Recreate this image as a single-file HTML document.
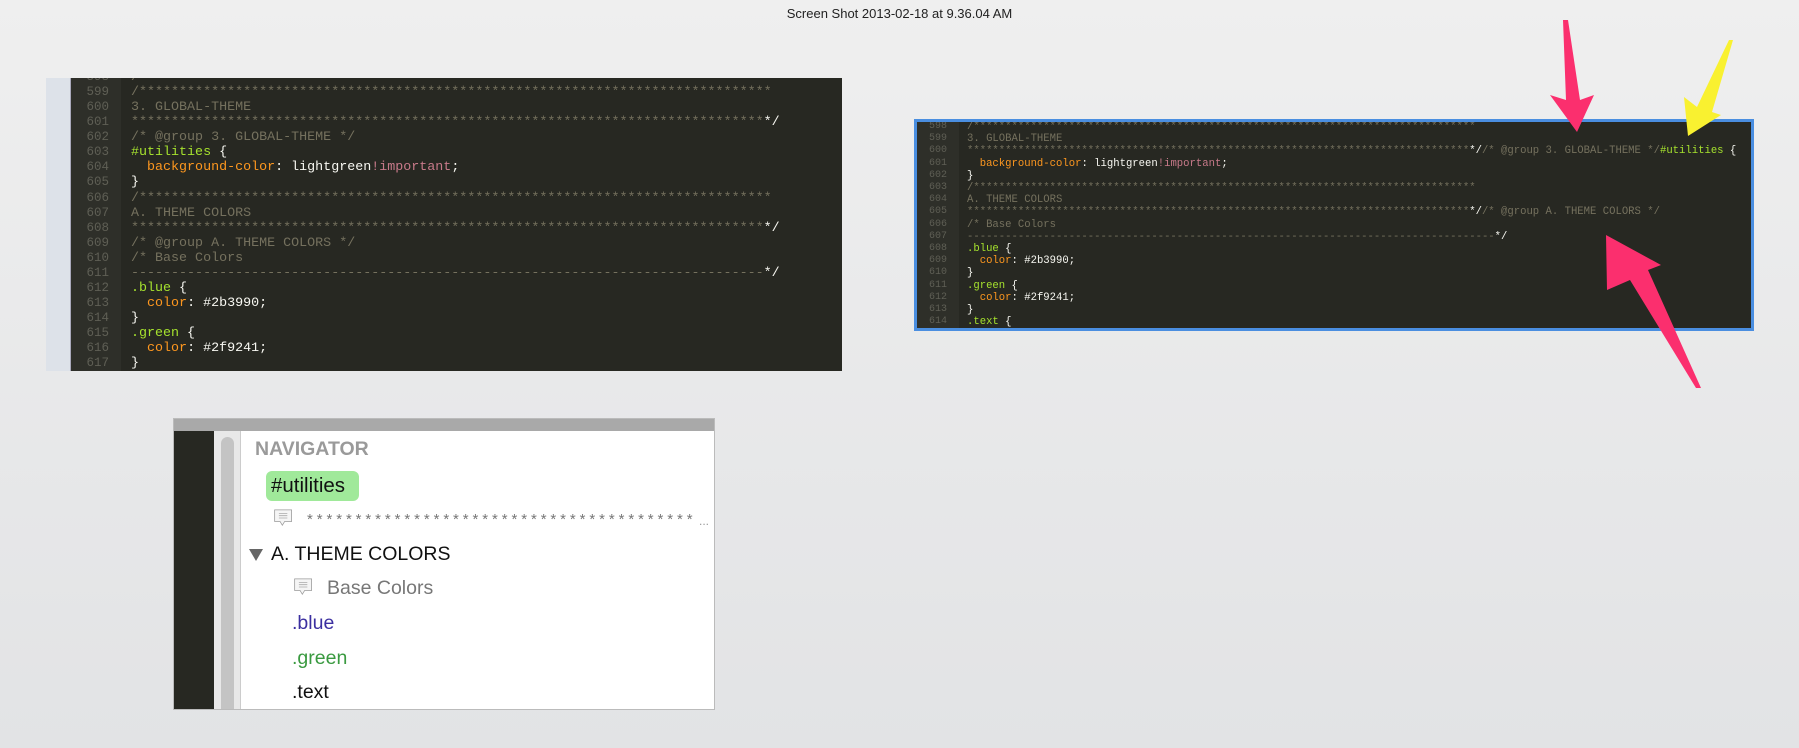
<!DOCTYPE html>
<html><head><meta charset="utf-8"><style>
*{margin:0;padding:0;box-sizing:border-box}
body{width:1799px;height:748px;overflow:hidden;background:linear-gradient(#efefef,#e2e3e5);font-family:"Liberation Sans",sans-serif;position:relative}
.title{position:absolute;top:6px;left:0;width:1799px;text-align:center;font-size:13px;color:#222}
.ed{position:absolute;background:#272822;overflow:hidden;font-family:"Liberation Mono",monospace;white-space:pre}
.ln{position:absolute;top:0;color:#5f5f55;text-align:right}
.code{position:absolute;top:0;color:#f8f8f2}
.c{color:#75715e}.s{color:#a6e22e}.p{color:#fd971f}.i{color:#c87a8a}
#e1{left:46px;top:78px;width:796px;height:293px;font-size:13.35px;line-height:15.06px}
#e1 .gut{position:absolute;left:0;top:0;width:25px;height:100%;background:#dde2e9;border-right:1px solid #aab}
#e1 .num{position:absolute;left:25px;top:0;width:50px;height:100%;background:#2e2f29}
#e1 .ln{left:25px;width:38px;top:-8px;font-size:12.5px}
#e1 .code{left:85px;top:-8px}
#e2{left:914px;top:119px;width:840px;height:212px;font-size:10.6px;line-height:12.2px;border:3px solid #4a8ee0}
#e2 .num{position:absolute;left:0;top:0;width:42px;height:100%;background:#2e2f29}
#e2 .ln{left:0;width:30px;top:-1px;font-size:10px}
#e2 .code{left:50px;top:-1px}
#nav{position:absolute;left:173px;top:418px;width:542px;height:292px;background:#fff;border:1px solid #bbb;overflow:hidden}
#nav .bar{position:absolute;left:0;top:0;width:100%;height:12px;background:#a9a9a9}
#nav .dark{position:absolute;left:0;top:12px;width:40px;height:280px;background:#272822}
#nav .sb{position:absolute;left:40px;top:12px;width:27px;height:280px;background:#e8e8e8;border-right:1px solid #ccc}
#nav .th{position:absolute;left:7px;top:6px;width:13px;height:280px;background:#c4c4c4;border-radius:7px}
.t{position:absolute;white-space:nowrap}
.ic{position:absolute;width:27px;height:20px}
</style></head><body>
<div class="title">Screen Shot 2013-02-18 at 9.36.04 AM</div>

<div class="ed" id="e1"><div class="gut"></div><div class="num"></div>
<div class="ln">598
599
600
601
602
603
604
605
606
607
608
609
610
611
612
613
614
615
616
617</div>
<div class="code"><span class="c">/*******************************************************************************</span>
<span class="c">/*******************************************************************************</span>
<span class="c">3. GLOBAL-THEME</span>
<span class="c">*******************************************************************************</span>*/
<span class="c">/* @group 3. GLOBAL-THEME */</span>
<span class="s">#utilities</span> {
  <span class="p">background-color</span>: lightgreen<span class="i">!important</span>;
}
<span class="c">/*******************************************************************************</span>
<span class="c">A. THEME COLORS</span>
<span class="c">*******************************************************************************</span>*/
<span class="c">/* @group A. THEME COLORS */</span>
<span class="c">/* Base Colors</span>
<span class="c">-------------------------------------------------------------------------------</span>*/
<span class="s">.blue</span> {
  <span class="p">color</span>: #2b3990;
}
<span class="s">.green</span> {
  <span class="p">color</span>: #2f9241;
}</div></div>

<div class="ed" id="e2"><div class="num"></div>
<div class="ln">598
599
600
601
602
603
604
605
606
607
608
609
610
611
612
613
614</div>
<div class="code"><span class="c">/*******************************************************************************</span>
<span class="c">3. GLOBAL-THEME</span>
<span class="c">*******************************************************************************</span>*/<span class="c">/* @group 3. GLOBAL-THEME */</span><span class="s">#utilities</span> {
  <span class="p">background-color</span>: lightgreen<span class="i">!important</span>;
}
<span class="c">/*******************************************************************************</span>
<span class="c">A. THEME COLORS</span>
<span class="c">*******************************************************************************</span>*/<span class="c">/* @group A. THEME COLORS */</span>
<span class="c">/* Base Colors</span>
<span class="c">-----------------------------------------------------------------------------------</span>*/
<span class="s">.blue</span> {
  <span class="p">color</span>: #2b3990;
}
<span class="s">.green</span> {
  <span class="p">color</span>: #2f9241;
}
<span class="s">.text</span> {</div></div>

<div id="nav"><div class="bar"></div><div class="dark"></div><div class="sb"><div class="th"></div></div>
<div class="t" style="left:81px;top:19px;font-size:19.5px;font-weight:bold;color:#9a9a9a">NAVIGATOR</div>
<div style="position:absolute;left:92px;top:52px;width:93px;height:30px;background:#a0e99a;border-radius:6px"></div>
<div class="t" style="left:97px;top:55px;font-size:20.5px;color:#111">#utilities</div>
<svg class="ic" style="left:96px;top:89px" width="28" height="26" viewBox="0 0 28 26"><path d="M2.5 2.5h22v15h-9l-3 5-3-5h-7z" fill="#f5f5f5" stroke="#999"/><path d="M8 7h11M8 10h11M8 13h11" stroke="#aaa"/></svg>
<div class="t" style="left:133px;top:92px;font-size:15px;color:#777;letter-spacing:3.9px">****************************************</div>
<div class="t" style="left:525px;top:95px;font-size:12px;color:#999">...</div>
<div style="position:absolute;left:75px;top:130px;width:0;height:0;border-left:7px solid transparent;border-right:7px solid transparent;border-top:12px solid #666"></div>
<div class="t" style="left:97px;top:124px;font-size:19.5px;color:#111">A. THEME COLORS</div>
<svg class="ic" style="left:116px;top:158px" width="28" height="26" viewBox="0 0 28 26"><path d="M2.5 2.5h22v15h-9l-3 5-3-5h-7z" fill="#f5f5f5" stroke="#999"/><path d="M8 7h11M8 10h11M8 13h11" stroke="#aaa"/></svg>
<div class="t" style="left:153px;top:158px;font-size:19.5px;color:#777">Base Colors</div>
<div class="t" style="left:118px;top:193px;font-size:19.5px;color:#3b2fa0">.blue</div>
<div class="t" style="left:118px;top:228px;font-size:19.5px;color:#3a9a40">.green</div>
<div class="t" style="left:118px;top:262px;font-size:19.5px;color:#111">.text</div>
</div>

<svg width="1799" height="748" style="position:absolute;left:0;top:0">
<polygon points="1563,20 1568,20 1580,100 1594,95 1577,132 1550,95 1566,100" fill="#fb2f6e"/>
<polygon points="1733,40 1712,112 1721,115 1688,136 1684,97 1697,107 1729,40" fill="#f9f130"/>
<polygon points="1606,235 1661,265 1648,270 1701,388 1696,388 1630,280 1607,290" fill="#fb2f6e"/>
</svg>
</body></html>
